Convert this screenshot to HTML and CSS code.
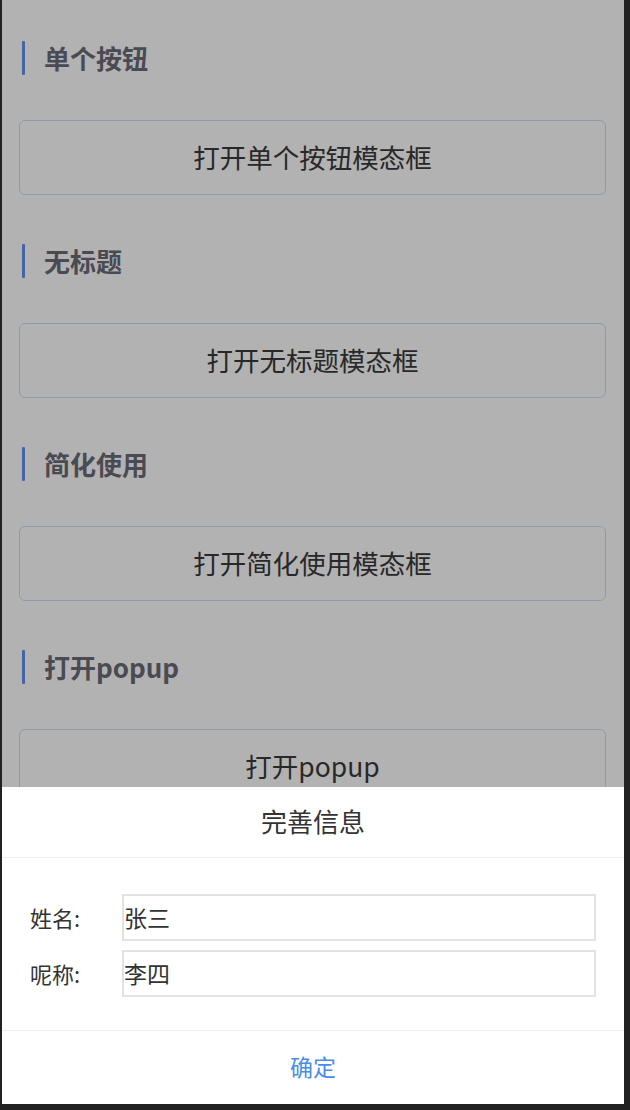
FILE: index.html
```html
<!DOCTYPE html>
<html lang="zh-CN">
<head>
<meta charset="utf-8">
<title>Modal demo</title>
<link rel="stylesheet" href="styles.css">
</head>
<body>
<div class="device">
  <main class="page">
    <section class="demo">
      <h2 class="demo-title">单个按钮</h2>
      <button class="demo-btn" type="button">打开单个按钮模态框</button>
    </section>
    <section class="demo">
      <h2 class="demo-title">无标题</h2>
      <button class="demo-btn" type="button">打开无标题模态框</button>
    </section>
    <section class="demo">
      <h2 class="demo-title">简化使用</h2>
      <button class="demo-btn" type="button">打开简化使用模态框</button>
    </section>
    <section class="demo">
      <h2 class="demo-title">打开popup</h2>
      <button class="demo-btn" type="button">打开popup</button>
    </section>
  </main>
  <div class="mask"></div>
  <div class="popup">
    <div class="popup-head">完善信息</div>
    <div class="popup-body">
      <label class="field">
        <span class="field-label">姓名:</span>
        <input class="field-input" type="text" value="张三">
      </label>
      <label class="field">
        <span class="field-label">呢称:</span>
        <input class="field-input" type="text" value="李四">
      </label>
    </div>
    <div class="popup-foot">确定</div>
  </div>
</div>
</body>
</html>
```

FILE: styles.css
```css
* { box-sizing: border-box; }

html, body {
  margin: 0;
  padding: 0;
  background: #222222;
}

body {
  font-family: "Noto Sans CJK SC", "Noto Sans", sans-serif;
  height: 1110px;
  overflow: hidden;
}

.device {
  position: relative;
  width: 622px;
  height: 1104px;
  margin-left: 2px;
  background: #ffffff;
  overflow: hidden;
}

.page {
  display: flex;
  flex-direction: column;
  padding: 41px 18px 0 17px;
}

.demo {
  display: flex;
  flex-direction: column;
  margin-bottom: 49px;
}

.demo-title {
  margin: 0 0 45px 3px;
  height: 34px;
  display: flex;
  align-items: center;
  gap: 19px;
  font-size: 26px;
  font-weight: 700;
  color: #6b6b78;
  line-height: 34px;
}

.demo-title::before {
  content: "";
  width: 3px;
  height: 34px;
  background: #5f93ee;
  border-radius: 1px;
}

.demo-btn {
  height: 75px;
  width: 100%;
  background: transparent;
  border: 1px solid #c9dff7;
  border-radius: 6px;
  font-family: inherit;
  font-size: 26.5px;
  color: #3a3a3a;
  padding: 0 0 2px 0;
}

.mask {
  position: absolute;
  inset: 0;
  background: rgba(0, 0, 0, 0.3);
}

.popup {
  position: absolute;
  left: 0;
  right: 0;
  bottom: 0;
  background: #ffffff;
  display: flex;
  flex-direction: column;
}

.popup-head {
  height: 71px;
  display: flex;
  align-items: center;
  justify-content: center;
  padding-bottom: 3px;
  font-size: 26px;
  color: #333333;
  border-bottom: 1px solid #eeeeee;
}

.popup-body {
  display: flex;
  flex-direction: column;
  gap: 9px;
  padding: 36px 28px 33px 28px;
  border-bottom: 1px solid #eeeeee;
}

.field {
  display: flex;
  align-items: center;
}

.field-label {
  width: 92px;
  flex: none;
  font-size: 22px;
  color: #333333;
  padding-bottom: 2px;
}

.field-input {
  flex: 1;
  height: 47px;
  border: 2px solid #e2e2e2;
  padding: 0 0 2px 0;
  font-family: inherit;
  font-size: 23px;
  color: #333333;
  background: #ffffff;
  outline: none;
}

.popup-foot {
  height: 73px;
  display: flex;
  align-items: center;
  justify-content: center;
  padding-bottom: 3px;
  font-size: 23px;
  color: #4a8de3;
}
```
